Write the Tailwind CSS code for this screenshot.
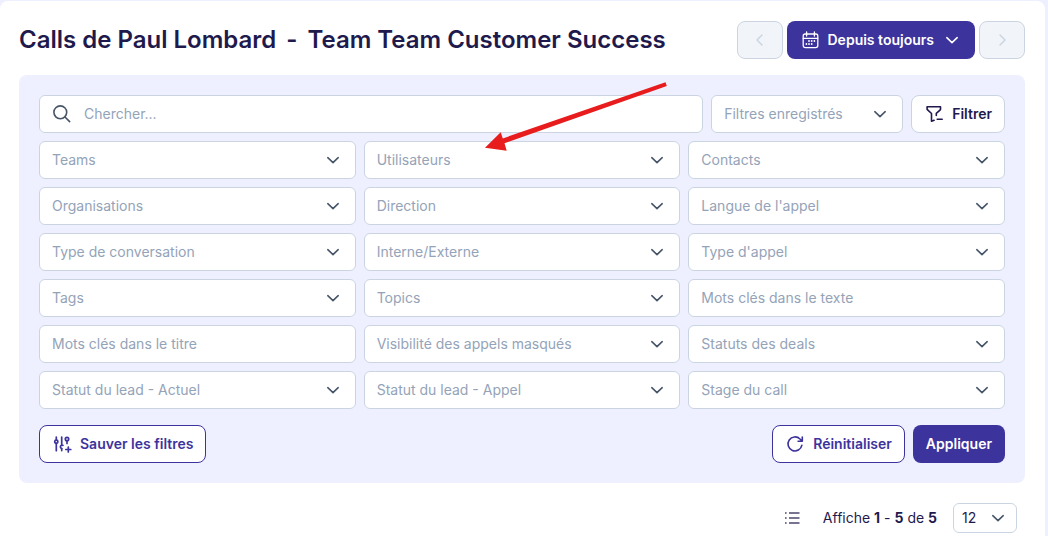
<!DOCTYPE html>
<html lang="fr">
<head>
  <meta charset="UTF-8" />
  <meta name="viewport" content="width=device-width, initial-scale=1.0"/>
  <title>Calls</title>
  <script src="https://cdn.jsdelivr.net/npm/@tailwindcss/browser@4"></script>
</head>
<body class="bg-[#eef0ff] min-h-screen pt-px pr-[3px] flex flex-col text-[#1f1a4d] font-['Inter','Liberation_Sans',sans-serif] text-sm">
  <main class="grow bg-white rounded-t-lg pl-[19px] pr-5 pt-5">

    <header class="flex items-center justify-between">
      <h1 class="flex gap-2.5 text-2xl font-semibold">
        <span>Calls de Paul Lombard</span>
        <span>-</span>
        <span>Team Team Customer Success</span>
      </h1>
      <div class="flex gap-1">
        <button disabled aria-label="Période précédente" class="w-[46px] h-[38px] flex items-center justify-center rounded-lg border border-[#cbd5e1] bg-[#f1f5f9] text-[#cbd5e1]">
          <svg class="size-4" viewBox="0 0 16 16" fill="none" stroke="currentColor" stroke-width="1.5" stroke-linecap="round" stroke-linejoin="round"><path d="m10 3-5 5 5 5"/></svg>
        </button>
        <button class="h-[38px] px-[15px] flex items-center rounded-lg bg-[#3d339c] text-white font-semibold">
          <svg class="size-[18px] mr-2" viewBox="0 0 18 18" fill="none" stroke="currentColor" stroke-width="1.3" stroke-linecap="round" stroke-linejoin="round">
            <rect x="1.2" y="3" width="14.6" height="13.6" rx="2"/>
            <path d="M1.2 7.3h14.6M4.6 1v4M12.4 1v4"/>
            <path stroke-width="1.8" d="M7 10h.01M9.7 10h.01M12.4 10h.01M4.4 13h.01M7 13h.01M9.7 13h.01"/>
          </svg>
          Depuis toujours
          <svg class="size-4 ml-2.5" viewBox="0 0 16 16" fill="none" stroke="currentColor" stroke-width="1.6" stroke-linecap="round" stroke-linejoin="round"><path d="m2.8 5.7 5.2 4.9 5.2-4.9"/></svg>
        </button>
        <button disabled aria-label="Période suivante" class="w-[46px] h-[38px] flex items-center justify-center rounded-lg border border-[#cbd5e1] bg-[#f1f5f9] text-[#cbd5e1]">
          <svg class="size-4" viewBox="0 0 16 16" fill="none" stroke="currentColor" stroke-width="1.5" stroke-linecap="round" stroke-linejoin="round"><path d="m6 3 5 5-5 5"/></svg>
        </button>
      </div>
    </header>

    <form class="mt-4 p-5 bg-[#eef0ff] rounded-lg" onsubmit="return false">
      <div class="flex gap-2 mb-2">
        <label class="grow h-[38px] flex items-center gap-3 px-3 bg-white border border-[#cbd5e1] rounded-md">
          <svg class="size-5 text-[#475569]" viewBox="0 0 20 20" fill="none" stroke="currentColor" stroke-width="1.6" stroke-linecap="round"><circle cx="8.3" cy="8.3" r="6.4"/><path d="m13 13 4.6 4.6"/></svg>
          <input type="text" aria-label="Chercher" placeholder="Chercher..." class="grow outline-none placeholder:text-[#94a3b8]">
        </label>
        <div class="grid w-48">
          <select aria-label="Filtres enregistrés" class="col-start-1 row-start-1 appearance-none h-[38px] px-3 bg-white border border-[#cbd5e1] rounded-md text-[#94a3b8]">
            <option>Filtres enregistrés</option>
          </select>
          <svg class="col-start-1 row-start-1 size-4 mr-[15px] justify-self-end self-center pointer-events-none text-[#475569]" viewBox="0 0 16 16" fill="none" stroke="currentColor" stroke-width="1.6" stroke-linecap="round" stroke-linejoin="round"><path d="m2.8 5.7 5.2 4.9 5.2-4.9"/></svg>
        </div>
        <button class="h-[38px] px-3 flex items-center gap-2 bg-white border border-[#cbd5e1] rounded-lg font-semibold">
          <svg class="size-5" viewBox="0 0 20 20" fill="none" stroke="currentColor" stroke-width="1.6" stroke-linecap="round" stroke-linejoin="round">
            <path d="M12.3 11.4V9.3l4.2-3.7V2.7H3.1v2.6l4.4 4.2v7.8l2.6-1M13.2 15.2h5"/>
          </svg>
          Filtrer
        </button>
      </div>

      <div id="filters" class="grid grid-cols-3 gap-2"></div>

      <div class="flex gap-2 mt-4 font-semibold">
        <button class="h-[38px] px-3 flex items-center gap-2 mr-auto bg-white border border-[#3d339c] rounded-lg text-[#3d339c]">
          <svg class="size-5" viewBox="0 0 20 20" fill="none" stroke="currentColor" stroke-width="1.7" stroke-linecap="round" stroke-linejoin="round">
            <path d="M4.3 3v3M4.3 9.4v7.3M9.7 3v7.5M9.7 14.6v2M15 7v2.5M16.3 13v5M13.8 15.5h5"/>
            <circle cx="4.3" cy="7.7" r="1.6"/><circle cx="15" cy="5" r="1.7"/>
            <path d="M11 11.4a1.7 1.7 0 1 0-1.3 3.1"/>
          </svg>
          Sauver les filtres
        </button>
        <button type="reset" class="h-[38px] px-3 flex items-center gap-2 bg-white border border-[#3d339c] rounded-lg text-[#3d339c]">
          <svg class="size-5" viewBox="0 0 20 20" fill="none" stroke="currentColor" stroke-width="1.6" stroke-linecap="round" stroke-linejoin="round"><path d="M16.9 11.2A7 7 0 1 1 15 5l2.1 2M17.3 3v4.2h-4.2"/></svg>
          Réinitialiser
        </button>
        <button type="submit" class="h-[38px] px-[13px] rounded-lg bg-[#3d339c] text-white">Appliquer</button>
      </div>
    </form>

    <div class="flex items-center justify-end mt-5 mr-2">
      <button aria-label="Vue liste" class="mr-[22px] text-[#4b456e]">
        <svg class="size-4" viewBox="0 0 16 16" fill="none" stroke="currentColor" stroke-width="1.7"><path d="M4 3h10.5M4 8h10.5M4 13h10.5M0 3h1.6M0 8h1.6M0 13h1.6"/></svg>
      </button>
      <p>Affiche <b class="font-bold">1</b> - <b class="font-bold">5</b> de <b class="font-bold">5</b></p>
      <div class="grid w-16 ml-4">
        <select aria-label="Appels par page" class="col-start-1 row-start-1 appearance-none h-[30px] px-2 bg-white border border-[#cbd5e1] rounded-md">
          <option>12</option>
        </select>
        <svg class="col-start-1 row-start-1 size-4 mr-[11px] justify-self-end self-center pointer-events-none text-[#475569]" viewBox="0 0 16 16" fill="none" stroke="currentColor" stroke-width="1.6" stroke-linecap="round" stroke-linejoin="round"><path d="m2.8 5.7 5.2 4.9 5.2-4.9"/></svg>
      </div>
    </div>
  </main>

  <script>
    const filters = [
      { label: "Teams" }, { label: "Utilisateurs", arrow: true }, { label: "Contacts" },
      { label: "Organisations" }, { label: "Direction" }, { label: "Langue de l'appel" },
      { label: "Type de conversation" }, { label: "Interne/Externe" }, { label: "Type d'appel" },
      { label: "Tags" }, { label: "Topics" }, { label: "Mots clés dans le texte", text: true },
      { label: "Mots clés dans le titre", text: true }, { label: "Visibilité des appels masqués" }, { label: "Statuts des deals" },
      { label: "Statut du lead - Actuel" }, { label: "Statut du lead - Appel" }, { label: "Stage du call" },
    ];

    // red arrow pointing at the field
    const arrow = `
      <svg class="absolute left-[120px] -top-[60px] w-[184px] h-[72px] pointer-events-none" viewBox="0 0 184 72" fill="#e81c1c">
        <path d="M181.5 1.2 182.8 5 20.5 62.2 22.7 69.8 1 66.8 16.7 51.3 18.8 57.4Z"/>
      </svg>`;

    document.getElementById("filters").innerHTML = filters.map(f => f.text ? `
      <input type="text" aria-label="${f.label}" placeholder="${f.label}"
        class="w-full h-[38px] px-3 pb-0.5 bg-white border border-[#cbd5e1] rounded-md outline-none placeholder:text-[#94a3b8]">
    ` : `
      <div class="relative grid">
        <select aria-label="${f.label}" class="col-start-1 row-start-1 appearance-none h-[38px] px-3 bg-white border border-[#cbd5e1] rounded-md text-[#94a3b8]">
          <option>${f.label}</option>
        </select>
        <svg class="col-start-1 row-start-1 size-4 mr-[15px] justify-self-end self-center pointer-events-none text-[#475569]" viewBox="0 0 16 16" fill="none" stroke="currentColor" stroke-width="1.6" stroke-linecap="round" stroke-linejoin="round"><path d="m2.8 5.7 5.2 4.9 5.2-4.9"/></svg>
        ${f.arrow ? arrow : ""}
      </div>
    `).join("");
  </script>
</body>
</html>
